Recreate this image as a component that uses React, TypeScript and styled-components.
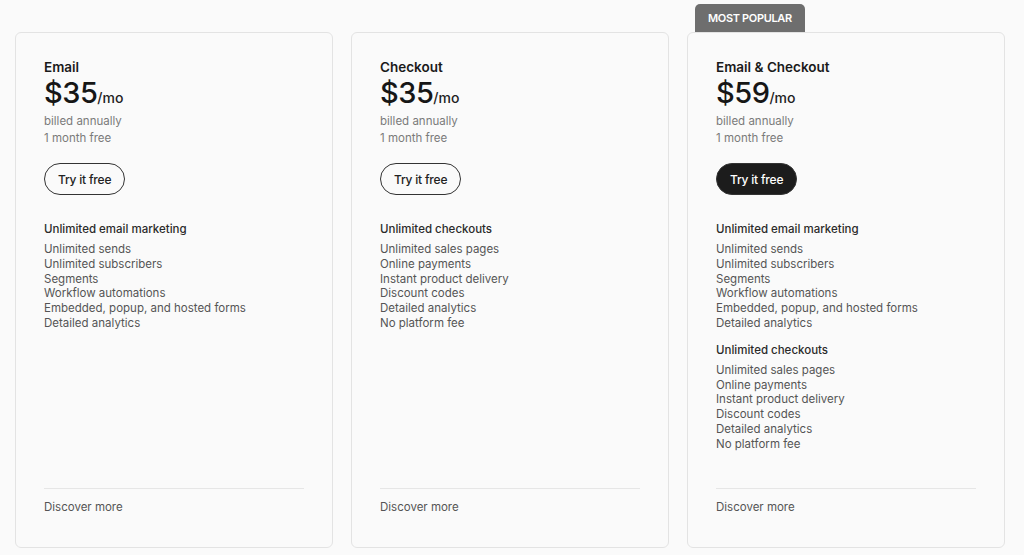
import React from "react";
import styled, { createGlobalStyle } from "styled-components";

const Global = createGlobalStyle`
  html, body { margin: 0; padding: 0; background: #fafafa; }
  body { font-family: Inter, "Noto Sans", Arial, sans-serif; color: #1f1f1f; -webkit-font-smoothing: antialiased; }
`;

const Page = styled.div`
  padding: 32px 0 0 15px;
  display: grid;
  grid-template-columns: repeat(3, 318px);
  column-gap: 18px;
`;

const CardWrap = styled.div`
  position: relative;
`;

const Badge = styled.div`
  position: absolute;
  left: 8px;
  top: -28px;
  height: 28px;
  padding: 0 13px;
  display: flex;
  align-items: center;
  background: #6e6e6e;
  color: #fff;
  font-size: 11px;
  font-weight: 600;
  letter-spacing: -0.35px;
  border-radius: 5px 5px 0 0;
`;

const Card = styled.div`
  box-sizing: border-box;
  height: 516px;
  border: 1px solid #e3e3e3;
  border-radius: 6px;
  background: #fafafa;
  padding: 25px 28px 32px;
  display: flex;
  flex-direction: column;
`;

const Title = styled.div`
  font-size: 13.5px;
  font-weight: 600;
  line-height: 18px;
  color: #1a1a1a;
`;

const PriceRow = styled.div`
  display: flex;
  align-items: baseline;
  margin-top: 1px;
  line-height: 31px;
`;

const Price = styled.span`
  font-size: 29px;
  font-weight: 500;
  letter-spacing: -0.5px;
  color: #161616;
`;

const Per = styled.span`
  font-size: 14px;
  font-weight: 500;
  color: #222;
`;

const Note = styled.div`
  font-size: 11.5px;
  line-height: 17px;
  color: #7a7a7a;
`;

const TryButton = styled.button<{ $dark?: boolean }>`
  margin-top: 16px;
  align-self: flex-start;
  height: 32px;
  padding: 0 13px;
  border-radius: 16px;
  font-family: inherit;
  font-size: 12px;
  font-weight: 500;
  letter-spacing: -0.2px;
  border: 1.5px solid #333;
  background: ${(p) => (p.$dark ? "#1c1c1c" : "transparent")};
  color: ${(p) => (p.$dark ? "#fff" : "#222")};
`;

const Features = styled.div`
  margin-top: 27px;
  display: flex;
  flex-direction: column;
  gap: 12px;
`;

const Group = styled.div``;

const GroupTitle = styled.div`
  font-size: 11.5px;
  font-weight: 500;
  line-height: 15px;
  color: #2a2a2a;
  margin-bottom: 5px;
`;

const Item = styled.div`
  font-size: 11.5px;
  line-height: 14.8px;
  color: #555;
`;

const Footer = styled.div`
  margin-top: auto;
  border-top: 1px solid #e6e6e6;
  padding-top: 10px;
  font-size: 11.5px;
  line-height: 16px;
  color: #555;
`;

type Plan = {
  title: string;
  price: string;
  popular?: boolean;
  groups: { title: string; items: string[] }[];
};

const emailGroup = {
  title: "Unlimited email marketing",
  items: [
    "Unlimited sends",
    "Unlimited subscribers",
    "Segments",
    "Workflow automations",
    "Embedded, popup, and hosted forms",
    "Detailed analytics",
  ],
};

const checkoutGroup = {
  title: "Unlimited checkouts",
  items: [
    "Unlimited sales pages",
    "Online payments",
    "Instant product delivery",
    "Discount codes",
    "Detailed analytics",
    "No platform fee",
  ],
};

const plans: Plan[] = [
  { title: "Email", price: "$35", groups: [emailGroup] },
  { title: "Checkout", price: "$35", groups: [checkoutGroup] },
  { title: "Email & Checkout", price: "$59", popular: true, groups: [emailGroup, checkoutGroup] },
];

export default function App() {
  return (
    <>
      <Global />
      <Page>
        {plans.map((p) => (
          <CardWrap key={p.title}>
            {p.popular && <Badge>MOST POPULAR</Badge>}
            <Card>
              <Title>{p.title}</Title>
              <PriceRow>
                <Price>{p.price}</Price>
                <Per>/mo</Per>
              </PriceRow>
              <Note>billed annually</Note>
              <Note>1 month free</Note>
              <TryButton $dark={p.popular}>Try it free</TryButton>
              <Features>
                {p.groups.map((g) => (
                  <Group key={g.title}>
                    <GroupTitle>{g.title}</GroupTitle>
                    {g.items.map((it) => (
                      <Item key={it}>{it}</Item>
                    ))}
                  </Group>
                ))}
              </Features>
              <Footer>Discover more</Footer>
            </Card>
          </CardWrap>
        ))}
      </Page>
    </>
  );
}
